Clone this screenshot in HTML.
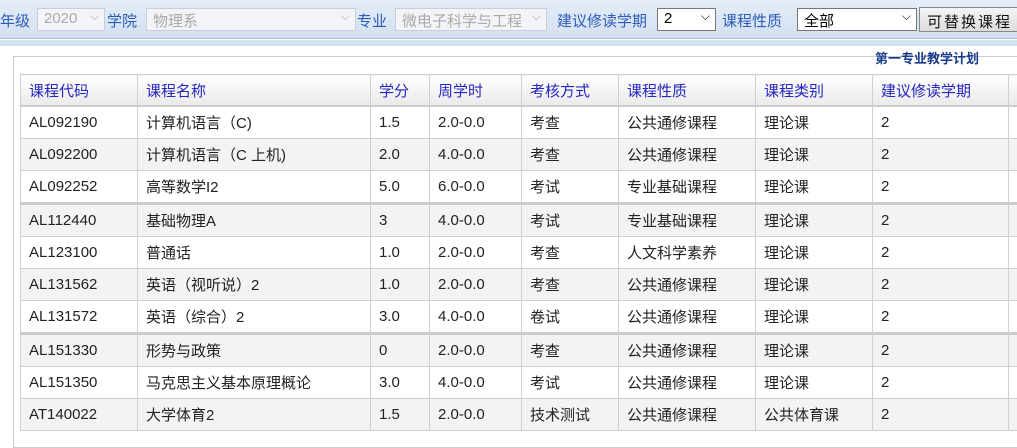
<!DOCTYPE html><html><head><meta charset="utf-8"><style>
body{margin:0;width:1017px;height:433px;overflow:hidden;background:#fff;font-family:"Liberation Sans","Noto Sans CJK SC",sans-serif;font-size:15px;position:relative}
.top{position:absolute;left:0;top:0;width:1017px;height:38px;background:linear-gradient(#e4edf8,#d3e0f1);border-bottom:1px solid #a9bcd6}
.band{position:absolute;left:0;top:40px;width:1017px;height:6px;background:#d4e1f2}
.t{position:absolute;top:10px;color:#2d5cb8;font-size:15px}
.sel{position:absolute;top:8px;height:23px;border:1px solid #ccd;background:#f2f4f7;color:#aaa;box-sizing:border-box;padding:1px 6px;font-size:15px}
.sel.a{border-color:#777;background:#fff;color:#000}
.ar{position:absolute;right:5px;top:0;font-size:12px}
.btn{position:absolute;left:919px;top:7px;width:110px;height:25px;border:1px solid #888;background:linear-gradient(#f5f5f5,#dcdcdc);box-sizing:border-box;padding:3px 7px;letter-spacing:2px;color:#111;white-space:nowrap;font-size:15px}
.panel{position:absolute;left:13px;top:56px;width:1010px;height:390px;border:1px solid #ccc}
.title{position:absolute;left:875px;top:48px;color:#1a3c8c;font-weight:bold;font-size:13px}
table{position:absolute;left:20px;top:74px;border-collapse:collapse;table-layout:fixed;width:1030px}
td,th{border:1px solid #d0d0d0;height:31px;padding:0 0 0 8px;text-align:left;font-weight:normal;white-space:nowrap;color:#222;overflow:hidden}
th{color:#2525c0;background:linear-gradient(#fff,#eaeaea);border-bottom:2px solid #ccc;height:30px}
tr.g td{background:#f3f3f3}
tr.k td{border-top:3px solid #ccc}
</style></head><body>
<div class="top">
<span class="t" style="left:0">年级</span>
<div class="sel" style="left:37px;width:68px">2020<span class="ar">⌵</span></div>
<span class="t" style="left:107px">学院</span>
<div class="sel" style="left:146px;width:210px">物理系<span class="ar">⌵</span></div>
<span class="t" style="left:357px">专业</span>
<div class="sel" style="left:395px;width:152px">微电子科学与工程<span class="ar">⌵</span></div>
<span class="t" style="left:557px">建议修读学期</span>
<div class="sel a" style="left:657px;width:59px">2<span class="ar">⌵</span></div>
<span class="t" style="left:722px">课程性质</span>
<div class="sel a" style="left:797px;width:120px">全部<span class="ar">⌵</span></div>
<div class="btn">可替换课程</div>
</div>
<div class="band"></div>
<div class="panel"></div>
<div class="title">第一专业教学计划</div>
<table>
<colgroup><col style="width:117px"><col style="width:233px"><col style="width:59px"><col style="width:92px"><col style="width:97px"><col style="width:137px"><col style="width:117px"><col style="width:136px"><col style="width:42px"></colgroup>
<tr><th>课程代码</th><th>课程名称</th><th>学分</th><th>周学时</th><th>考核方式</th><th>课程性质</th><th>课程类别</th><th>建议修读学期</th><th></th></tr>
<tr><td>AL092190</td><td>计算机语言（C)</td><td>1.5</td><td>2.0-0.0</td><td>考查</td><td>公共通修课程</td><td>理论课</td><td>2</td><td></td></tr>
<tr class="g"><td>AL092200</td><td>计算机语言（C 上机)</td><td>2.0</td><td>4.0-0.0</td><td>考查</td><td>公共通修课程</td><td>理论课</td><td>2</td><td></td></tr>
<tr><td>AL092252</td><td>高等数学I2</td><td>5.0</td><td>6.0-0.0</td><td>考试</td><td>专业基础课程</td><td>理论课</td><td>2</td><td></td></tr>
<tr class="g k"><td>AL112440</td><td>基础物理A</td><td>3</td><td>4.0-0.0</td><td>考试</td><td>专业基础课程</td><td>理论课</td><td>2</td><td></td></tr>
<tr><td>AL123100</td><td>普通话</td><td>1.0</td><td>2.0-0.0</td><td>考查</td><td>人文科学素养</td><td>理论课</td><td>2</td><td></td></tr>
<tr class="g"><td>AL131562</td><td>英语（视听说）2</td><td>1.0</td><td>2.0-0.0</td><td>考查</td><td>公共通修课程</td><td>理论课</td><td>2</td><td></td></tr>
<tr><td>AL131572</td><td>英语（综合）2</td><td>3.0</td><td>4.0-0.0</td><td>卷试</td><td>公共通修课程</td><td>理论课</td><td>2</td><td></td></tr>
<tr class="g k"><td>AL151330</td><td>形势与政策</td><td>0</td><td>2.0-0.0</td><td>考查</td><td>公共通修课程</td><td>理论课</td><td>2</td><td></td></tr>
<tr><td>AL151350</td><td>马克思主义基本原理概论</td><td>3.0</td><td>4.0-0.0</td><td>考试</td><td>公共通修课程</td><td>理论课</td><td>2</td><td></td></tr>
<tr class="g"><td>AT140022</td><td>大学体育2</td><td>1.5</td><td>2.0-0.0</td><td>技术测试</td><td>公共通修课程</td><td>公共体育课</td><td>2</td><td></td></tr>
</table>
</body></html>
